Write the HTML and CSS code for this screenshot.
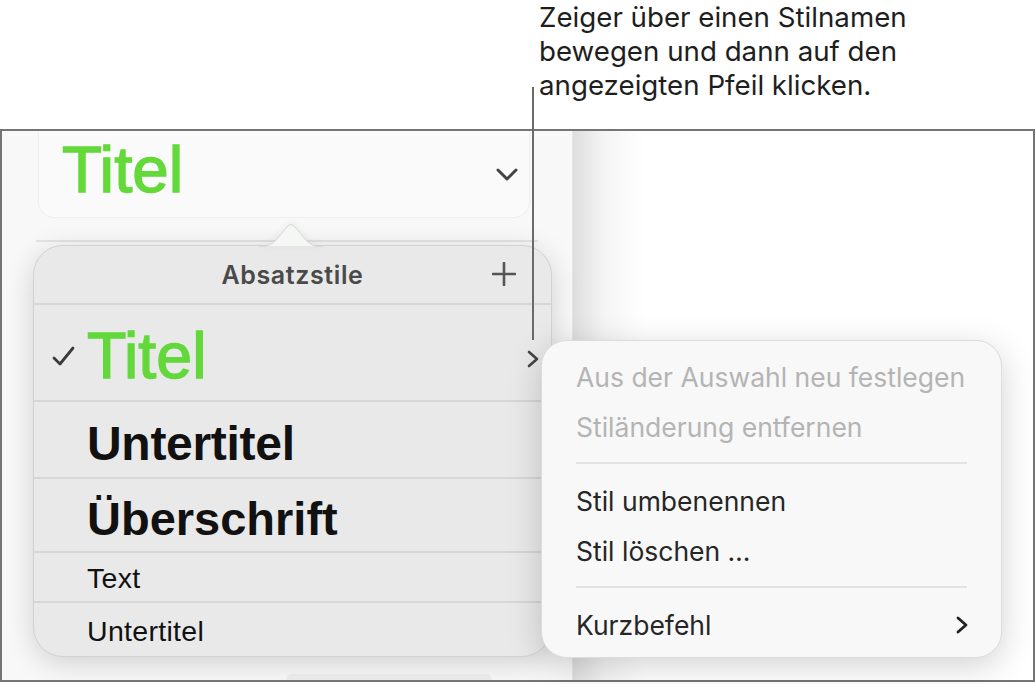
FILE: index.html
```html
<!DOCTYPE html>
<html lang="de">
<head>
  <meta charset="UTF-8" />
  <meta name="viewport" content="width=device-width, initial-scale=1.0" />
  <title>Absatzstile</title>
  <link rel="stylesheet" href="styles.css">
</head>
<body>

  <div class="note">
    <p>Zeiger über einen Stilnamen<br>bewegen und dann auf den<br>angezeigten Pfeil klicken.</p>
  </div>

  <div class="frame">
    <aside class="sidebar">
      <div class="style-field">
        <span class="field-name">Titel</span>
        <svg class="chev-down" width="22" height="13" viewBox="0 0 22 13">
          <polyline points="2,2 11,11 20,2" fill="none" stroke="#444" stroke-width="3" stroke-linecap="round" stroke-linejoin="round"/>
        </svg>
      </div>
      <div class="rule"></div>

      <div class="styles-pop">
        <svg class="pop-arrow" width="64" height="25" viewBox="0 0 64 25">
          <path d="M0 25 Q12 25 18 17 L28 5 Q32 0 36 5 L46 17 Q52 25 64 25 Z" fill="#f5f7f5" stroke="#d6d6d6" stroke-width="1"/>
        </svg>
        <div class="pop-head">
          <span class="pop-title">Absatzstile</span>
          <svg class="plus" width="24" height="24" viewBox="0 0 24 24">
            <path d="M12 1 V23 M1 12 H23" stroke="#555" stroke-width="2.6" stroke-linecap="round"/>
          </svg>
        </div>
        <ul class="style-list">
          <li class="row row-title">
            <svg class="check" width="23" height="21" viewBox="0 0 23 21">
              <polyline points="2,12 8,18 21,2" fill="none" stroke="#3a3a3a" stroke-width="2.8" stroke-linecap="round" stroke-linejoin="round"/>
            </svg>
            <span class="name name-title">Titel</span>
            <svg class="chev-right" width="14" height="18" viewBox="0 0 14 18">
              <polyline points="3,2 11,9 3,16" fill="none" stroke="#444" stroke-width="2.6" stroke-linecap="round" stroke-linejoin="round"/>
            </svg>
          </li>
          <li class="row row-sub"><span></span><span class="name name-sub">Untertitel</span></li>
          <li class="row row-head"><span></span><span class="name name-head">Überschrift</span></li>
          <li class="row row-text"><span></span><span class="name name-small">Text</span></li>
          <li class="row row-last"><span></span><span class="name name-small">Untertitel</span></li>
        </ul>
      </div>

      <div class="sidebar-foot"></div>
    </aside>
    <main class="canvas"></main>
  </div>

  <div class="leader"></div>

  <div class="style-menu">
    <div class="menu-item disabled">Aus der Auswahl neu festlegen</div>
    <div class="menu-item disabled">Stiländerung entfernen</div>
    <div class="menu-sep"></div>
    <div class="menu-item">Stil umbenennen</div>
    <div class="menu-item">Stil löschen …</div>
    <div class="menu-sep"></div>
    <div class="menu-item has-sub">
      <span>Kurzbefehl</span>
      <svg width="14" height="18" viewBox="0 0 14 18">
        <polyline points="3,2 11,9 3,16" fill="none" stroke="#222" stroke-width="2.8" stroke-linecap="round" stroke-linejoin="round"/>
      </svg>
    </div>
  </div>

</body>
</html>
```

FILE: styles.css
```css
html, body {
  margin: 0;
  background: #fff;
  font-family: Inter, "Noto Sans", sans-serif;
  color: #222;
}
body {
  position: relative;
  width: 1036px;
  height: 684px;
  overflow: hidden;
}

/* callout text above the screenshot */
.note {
  height: 129px;
  padding-left: 539px;
  box-sizing: border-box;
}
.note p {
  margin: 0;
  font-size: 27.7px;
  line-height: 34px;
  color: #1e1e1e;
}

.frame {
  display: flex;
  width: 1035px;
  height: 553px;
  box-sizing: border-box;
  border: 2px solid #757575;
  overflow: hidden;
}

/* left inspector */
.sidebar {
  width: 570px;
  flex: none;
  background: #f8f8f8;
  border-right: 1px solid #e6e6e6;
  display: flex;
  flex-direction: column;
}
.style-field {
  margin-left: 36px;
  width: 492px;
  height: 87px;
  box-sizing: border-box;
  padding: 0 11px 8px 23px;
  display: flex;
  align-items: center;
  justify-content: space-between;
  background: #fafafa;
  border: 1px solid #efefef;
  border-top: none;
  border-radius: 0 0 16px 16px;
}
.field-name {
  font-family: "Liberation Sans", Arial, sans-serif;
  font-size: 65.5px;
  line-height: 1;
  color: #63d93a;
  -webkit-text-stroke: 1.4px #63d93a;
}
.chev-down {
  margin-top: 8px;
}
.rule {
  margin: 22px 0 0 34px;
  width: 502px;
  height: 2px;
  background: #e4e4e4;
}

/* paragraph style popover */
.styles-pop {
  position: relative;
  margin: 3px 0 0 31px;
  width: 519px;
  height: 412px;
  box-sizing: border-box;
  background: #e9e9e9;
  border: 1px solid #d2d2d2;
  border-radius: 30px;
  box-shadow: 0 6px 28px rgba(0, 0, 0, 0.16);
  display: flex;
  flex-direction: column;
}
.pop-arrow {
  position: absolute;
  top: -24px;
  left: 225px;
  filter: drop-shadow(0 -1px 3px rgba(0, 0, 0, 0.06));
}
.pop-head {
  height: 57px;
  flex: none;
  position: relative;
  display: flex;
  align-items: center;
  justify-content: center;
}
.pop-title {
  font-size: 25px;
  font-weight: 600;
  letter-spacing: 0.6px;
  color: #4a4a4a;
}
.plus {
  position: absolute;
  right: 35px;
  top: 16px;
}
.style-list {
  list-style: none;
  margin: 0;
  padding: 0;
  flex: 1;
  display: flex;
  flex-direction: column;
  overflow: hidden;
  border-radius: 0 0 30px 30px;
}
.row {
  display: grid;
  grid-template-columns: 53px 1fr 30px;
  align-items: center;
  border-top: 2px solid #d6d6d6;
  box-sizing: border-box;
}
.check {
  margin-left: 18px;
}
.chev-right {
  justify-self: end;
  margin-right: 11px;
  margin-top: 4px;
}
.name {
  font-family: "Liberation Sans", Arial, sans-serif;
  line-height: 1;
  color: #111;
  white-space: nowrap;
}
.row-title { height: 97px; padding-top: 8px; }
.row-sub   { height: 77px; padding-top: 8px; }
.row-head  { height: 74px; padding-top: 6px; }
.row-text  { height: 50px; padding-top: 2px; }
.row-last  { flex: 1; padding-top: 4px; }

.name-title {
  font-size: 64.5px;
  color: #62d83a;
  -webkit-text-stroke: 1.4px #62d83a;
}
.name-sub {
  font-size: 48px;
  font-weight: bold;
  letter-spacing: -0.3px;
}
.name-head {
  font-size: 47px;
  font-weight: bold;
}
.name-small {
  font-size: 28.5px;
  letter-spacing: 0.3px;
}

.sidebar-foot {
  margin: auto 0 0 284px;
  width: 206px;
  height: 6px;
  background: #eeeeee;
  border-radius: 8px 8px 0 0;
}

/* document area */
.canvas {
  flex: 1;
  background: linear-gradient(to right, #dedede 0, #f4f4f4 30px, #fff 70px);
}

/* leader line from the note to the arrow */
.leader {
  position: absolute;
  left: 532px;
  top: 87px;
  width: 2px;
  height: 253px;
  background: #6a6a6a;
}

/* context menu for a style */
.style-menu {
  position: absolute;
  left: 541px;
  top: 340px;
  width: 461px;
  height: 318px;
  box-sizing: border-box;
  padding: 11px 34px 9px;
  background: #f8f8f8;
  border: 1px solid #dcdcdc;
  border-radius: 26px;
  box-shadow: 0 8px 34px rgba(0, 0, 0, 0.18);
}
.menu-item {
  height: 50px;
  line-height: 50px;
  font-size: 26.5px;
  color: #262626;
  white-space: nowrap;
}
.menu-item.disabled {
  color: #b4b4b4;
}
.menu-item.has-sub {
  display: flex;
  align-items: center;
  justify-content: space-between;
}
.menu-item.has-sub svg {
  margin-right: -2px;
}
.menu-sep {
  height: 2px;
  margin: 10px 0 12px;
  background: #e2e2e2;
}
```
